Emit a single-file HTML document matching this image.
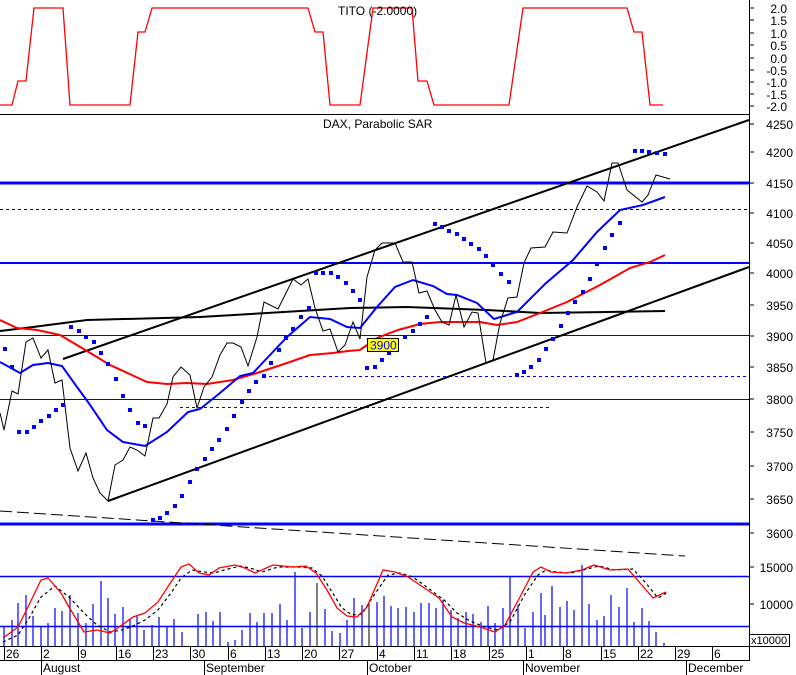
<!DOCTYPE html>
<html><head><meta charset="utf-8"><style>
html,body{margin:0;padding:0;background:#fff;width:796px;height:675px;overflow:hidden}
svg{display:block;font-family:"Liberation Sans",sans-serif;font-size:12px}
</style></head><body>
<svg width="796" height="675" viewBox="0 0 796 675" xmlns="http://www.w3.org/2000/svg">
<rect width="796" height="675" fill="#fff"/>
<!-- TITO panel -->
<polyline fill="none" stroke="#f00" stroke-width="1.3" points="0,105 12,105 18,81 26,81 34,8 63,8 70,105 130,105 138,32 145,32 152,8 308,8 315,32 323,32 330,105 360,105 373,8 412,8 418,81 427,81 434,105 509,105 523,8 627,8 634,32 642,32 650,105 663,105"/>
<text x="338" y="15">TITO (-2.0000)</text>
<line x1="0" y1="114.5" x2="749" y2="114.5" stroke="#000"/>
<g text-anchor="end">
<text x="787" y="13">2.0</text><text x="787" y="25">1.5</text><text x="787" y="38">1.0</text><text x="787" y="50">0.5</text><text x="787" y="63">0.0</text><text x="787" y="75">-0.5</text><text x="787" y="87">-1.0</text><text x="787" y="99">-1.5</text><text x="787" y="111">-2.0</text>
</g>
<!-- price panel -->
<line x1="0" y1="183" x2="749" y2="183" stroke="#00f" stroke-width="3"/>
<line x1="0" y1="524" x2="749" y2="524" stroke="#00f" stroke-width="3"/>
<line x1="0" y1="263" x2="749" y2="263" stroke="#00f" stroke-width="2"/>
<line x1="0" y1="335.5" x2="749" y2="335.5" stroke="#00f"/>
<line x1="0" y1="399.5" x2="749" y2="399.5" stroke="#00f"/>
<line x1="0" y1="209.5" x2="749" y2="209.5" stroke="#000" stroke-dasharray="3,3"/>
<line x1="263" y1="376.5" x2="749" y2="376.5" stroke="#00f" stroke-dasharray="3,3"/>
<line x1="180" y1="407.5" x2="550" y2="407.5" stroke="#00f" stroke-dasharray="3,3"/>
<line x1="0" y1="511" x2="685" y2="556" stroke="#000" stroke-dasharray="12,5"/>
<line x1="63" y1="359" x2="749" y2="120" stroke="#000" stroke-width="2"/>
<line x1="108" y1="501" x2="749" y2="267" stroke="#000" stroke-width="2"/>
<polyline fill="none" stroke="#000" stroke-width="2" points="0,331 33,327 87,320 200,317 267,313 350,308 407,307 487,310 540,313 607,312 665,311"/>
<polyline fill="none" stroke="#f00" stroke-width="2" points="0,320 17,328 37,330 60,335 87,351 110,365 147,382 167,384 187,383 207,384 233,380 257,373 287,363 310,355 333,353 348,351 360,350 377,338 398,330 420,324 440,322 480,322 497,325 517,322 540,313 567,302 600,285 630,268 650,262 665,255"/>
<polyline fill="none" stroke="#00f" stroke-width="2" points="0,362 20,373 33,365 48,363 62,366 77,387 88,402 107,430 123,442 145,446 167,432 188,412 200,409 220,393 240,376 253,373 270,355 287,337 310,317 330,319 347,327 360,328 377,307 395,287 413,280 433,286 447,294 457,295 477,303 494,319 517,312 545,284 573,260 597,232 620,210 643,205 665,197"/>
<polyline fill="none" stroke="#000" stroke-width="1" points="0,413 4,430 12,391 18,394 26,342 33,338 41,358 48,350 55,383 62,380 70,448 78,471 86,453 93,478 100,493 108,501 115,465 123,460 130,447 137,450 145,456 153,418 159,418 167,404 173,377 181,367 190,375 197,408 204,387 212,377 220,355 227,343 233,343 241,347 248,366 257,337 264,302 278,309 293,279 301,285 308,279 315,308 323,331 330,329 338,352 345,345 353,322 360,339 367,277 375,250 382,243 395,243 403,262 412,262 419,293 427,291 435,310 442,322 449,325 456,295 464,327 472,312 478,313 486,363 493,360 500,323 508,298 517,297 524,263 531,248 545,247 553,232 567,233 577,207 587,186 597,192 604,201 612,163 618,163 627,190 642,202 648,195 656,175 670,179"/>
<g fill="#00f">
<rect x="3" y="347" width="4" height="4"/><rect x="10" y="365" width="4" height="4"/><rect x="17" y="430" width="4" height="4"/><rect x="25" y="430" width="4" height="4"/><rect x="32" y="425" width="4" height="4"/><rect x="39" y="419" width="4" height="4"/><rect x="47" y="414" width="4" height="4"/><rect x="54" y="408" width="4" height="4"/><rect x="61" y="403" width="4" height="4"/><rect x="69" y="325" width="4" height="4"/><rect x="77" y="329" width="4" height="4"/><rect x="84" y="335" width="4" height="4"/><rect x="92" y="340" width="4" height="4"/><rect x="99" y="351" width="4" height="4"/><rect x="106" y="362" width="4" height="4"/><rect x="114" y="377" width="4" height="4"/><rect x="121" y="394" width="4" height="4"/><rect x="128" y="408" width="4" height="4"/><rect x="136" y="421" width="4" height="4"/><rect x="143" y="424" width="4" height="4"/><rect x="151" y="518" width="4" height="4"/><rect x="158" y="516" width="4" height="4"/><rect x="165" y="511" width="4" height="4"/><rect x="173" y="504" width="4" height="4"/><rect x="180" y="494" width="4" height="4"/><rect x="188" y="480" width="4" height="4"/><rect x="195" y="467" width="4" height="4"/><rect x="203" y="457" width="4" height="4"/><rect x="210" y="447" width="4" height="4"/><rect x="217" y="438" width="4" height="4"/><rect x="225" y="427" width="4" height="4"/><rect x="232" y="414" width="4" height="4"/><rect x="240" y="400" width="4" height="4"/><rect x="247" y="389" width="4" height="4"/><rect x="254" y="380" width="4" height="4"/><rect x="262" y="374" width="4" height="4"/><rect x="269" y="361" width="4" height="4"/><rect x="277" y="348" width="4" height="4"/><rect x="284" y="336" width="4" height="4"/><rect x="291" y="327" width="4" height="4"/><rect x="299" y="315" width="4" height="4"/><rect x="307" y="306" width="4" height="4"/><rect x="314" y="271" width="4" height="4"/><rect x="321" y="271" width="4" height="4"/><rect x="329" y="271" width="4" height="4"/><rect x="336" y="275" width="4" height="4"/><rect x="344" y="281" width="4" height="4"/><rect x="351" y="289" width="4" height="4"/><rect x="358" y="298" width="4" height="4"/><rect x="365" y="366" width="4" height="4"/><rect x="373" y="365" width="4" height="4"/><rect x="380" y="358" width="4" height="4"/><rect x="387" y="351" width="4" height="4"/><rect x="395" y="344" width="4" height="4"/><rect x="403" y="335" width="4" height="4"/><rect x="411" y="329" width="4" height="4"/><rect x="418" y="322" width="4" height="4"/><rect x="425" y="315" width="4" height="4"/><rect x="433" y="222" width="4" height="4"/><rect x="440" y="225" width="4" height="4"/><rect x="447" y="229" width="4" height="4"/><rect x="455" y="232" width="4" height="4"/><rect x="462" y="237" width="4" height="4"/><rect x="469" y="242" width="4" height="4"/><rect x="477" y="247" width="4" height="4"/><rect x="484" y="254" width="4" height="4"/><rect x="491" y="263" width="4" height="4"/><rect x="499" y="272" width="4" height="4"/><rect x="507" y="280" width="4" height="4"/><rect x="515" y="373" width="4" height="4"/><rect x="522" y="370" width="4" height="4"/><rect x="529" y="365" width="4" height="4"/><rect x="537" y="358" width="4" height="4"/><rect x="544" y="347" width="4" height="4"/><rect x="551" y="337" width="4" height="4"/><rect x="559" y="324" width="4" height="4"/><rect x="566" y="311" width="4" height="4"/><rect x="573" y="300" width="4" height="4"/><rect x="581" y="290" width="4" height="4"/><rect x="588" y="277" width="4" height="4"/><rect x="595" y="262" width="4" height="4"/><rect x="603" y="246" width="4" height="4"/><rect x="610" y="233" width="4" height="4"/><rect x="618" y="221" width="4" height="4"/><rect x="633" y="149" width="4" height="4"/><rect x="640" y="149" width="4" height="4"/><rect x="647" y="150" width="4" height="4"/><rect x="655" y="151" width="4" height="4"/><rect x="663" y="152" width="4" height="4"/>
</g>
<rect x="367.5" y="338.5" width="31" height="13" fill="#ff0" stroke="#000"/>
<text x="370" y="349.5" fill="#00f">3900</text>
<text x="323" y="128">DAX, Parabolic SAR</text>
<g text-anchor="end">
<text x="793" y="129">4250</text><text x="793" y="157">4200</text><text x="793" y="188">4150</text><text x="793" y="218">4100</text><text x="793" y="248">4050</text><text x="793" y="278">4000</text><text x="793" y="310">3950</text><text x="793" y="341">3900</text><text x="793" y="372">3850</text><text x="793" y="404">3800</text><text x="793" y="437">3750</text><text x="793" y="471">3700</text><text x="793" y="504">3650</text><text x="793" y="538">3600</text>
<text x="793" y="572">15000</text><text x="793" y="609">10000</text>
</g>
<!-- bottom panel -->
<line x1="0" y1="576.5" x2="749" y2="576.5" stroke="#00f" stroke-width="1.5"/>
<line x1="0" y1="626.5" x2="749" y2="626.5" stroke="#00f" stroke-width="1.5"/>
<path stroke="#00f" stroke-width="1.2" fill="none" d="M4 646V626M12 646V620M18 646V603M26 646V595M33 646V616M41 646V626M48 646V623M55 646V608M62 646V611M70 646V595M78 646V613M86 646V623M93 646V604M101 646V581M108 646V598M115 646V614M123 646V607M130 646V619M137 646V616M144 646V630M152 646V625M159 646V617M167 646V626M174 646V619M182 646V632M198 646V614M206 646V612M213 646V621M220 646V612M228 646V642M235 646V640M242 646V630M250 646V613M257 646V622M264 646V613M272 646V613M280 646V604M287 646V620M295 646V572M302 646V628M310 646V612M325 646V609M332 646V631M340 646V633M347 646V620M354 646V598M362 646V605M377 646V602M384 646V596M391 646V606M398 646V608M406 646V607M414 646V612M421 646V603M429 646V603M436 646V608M443 646V600M451 646V610M458 646V618M466 646V612M473 646V614M481 646V622M488 646V606M495 646V623M503 646V608M510 646V576M518 646V605M525 646V628M533 646V612M541 646V593M545 646V615M552 646V586M560 646V607M567 646V601M574 646V610M582 646V565M589 646V604M597 646V620M604 646V616M611 646V595M619 646V607M627 646V588M634 646V622M642 646V608M649 646V621M656 646V632M664 646V643"/>
<path stroke="#000" stroke-width="1" d="M317 646V583M369 646V603"/>
<polyline fill="none" stroke="#000" stroke-width="1.2" stroke-dasharray="3,3" points="3,642 18,635 28,620 41,597 55,586 69,597 84,613 97,625 110,632 122,630 133,626 145,620 158,610 171,593 181,578 192,570 204,572 214,573 224,570 240,566 250,568 262,572 278,567 298,567 312,568 322,576 332,592 342,608 352,615 362,614 372,598 388,575 400,573 413,577 428,588 444,600 457,613 470,621 485,627 498,630 510,622 525,594 538,575 546,570 556,572 571,573 587,569 599,566 615,570 633,569 645,582 658,598 668,592"/>
<polyline fill="none" stroke="#f00" stroke-width="1.3" points="3,638 18,627 28,607 41,580 48,578 61,593 69,607 84,632 97,630 110,633 122,625 133,617 145,613 158,602 171,582 181,567 189,564 199,573 209,575 219,568 235,565 245,568 255,573 273,565 293,567 306,566 316,573 327,590 337,608 347,616 357,617 367,607 383,570 395,572 408,577 423,587 439,598 452,617 464,623 480,627 495,632 505,625 520,597 533,572 541,567 551,572 566,573 582,570 594,565 610,570 628,569 640,583 653,598 666,592"/>
<!-- axes -->
<line x1="749.5" y1="0" x2="749.5" y2="661" stroke="#000"/>
<path stroke="#000" d="M749 8h5M749 20h5M749 33h5M749 45h5M749 58h5M749 70h5M749 82h5M749 94h5M749 106h5M749 124h5M749 152h5M749 183h5M749 213h5M749 243h5M749 273h5M749 305h5M749 336h5M749 367h5M749 399h5M749 432h5M749 466h5M749 499h5M749 533h5M749 567h5M749 604h5"/>
<rect x="749.5" y="634.5" width="40" height="12" fill="#fff" stroke="#000"/>
<text x="751" y="644" font-size="11">x10000</text>
<line x1="0" y1="646.5" x2="749" y2="646.5" stroke="#000"/>
<line x1="0" y1="660.5" x2="749" y2="660.5" stroke="#000"/>
<path stroke="#000" d="M4.5 646V661M41.5 646V675M78.5 646V661M116.5 646V661M153.5 646V661M190.5 646V661M228.5 646V661M265.5 646V661M302.5 646V661M339.5 646V661M377.5 646V661M414.5 646V661M451.5 646V661M489.5 646V661M526.5 646V661M563.5 646V661M601.5 646V661M638.5 646V661M675.5 646V661M712.5 646V661M204.5 661V675M367.5 661V675M523.5 661V675M686.5 661V675"/>
<g>
<text x="6" y="658">26</text><text x="43" y="658">2</text><text x="80" y="658">9</text><text x="118" y="658">16</text><text x="155" y="658">23</text><text x="192" y="658">30</text><text x="230" y="658">6</text><text x="267" y="658">13</text><text x="304" y="658">20</text><text x="341" y="658">27</text><text x="379" y="658">4</text><text x="416" y="658">11</text><text x="453" y="658">18</text><text x="491" y="658">25</text><text x="528" y="658">1</text><text x="565" y="658">8</text><text x="603" y="658">15</text><text x="640" y="658">22</text><text x="677" y="658">29</text><text x="714" y="658">6</text>
<text x="43" y="672">August</text><text x="206" y="672">September</text><text x="369" y="672">October</text><text x="525" y="672">November</text><text x="688" y="672">December</text>
</g>
</svg>
</body></html>
